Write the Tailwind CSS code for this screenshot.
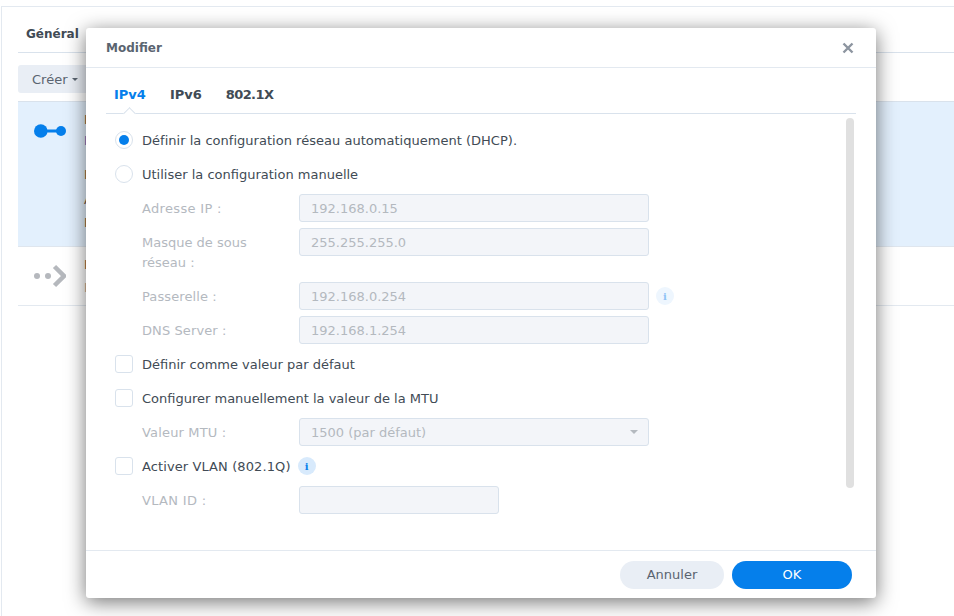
<!DOCTYPE html>
<html lang="fr">

<head>
    <meta charset="UTF-8">
    <title>Modifier</title>
    <script src="https://cdn.jsdelivr.net/npm/@tailwindcss/browser@4"></script>
</head>

<body class="relative w-[954px] h-[616px] overflow-hidden bg-white font-['DejaVu_Sans',sans-serif] text-[13px] text-[#414b55]">
    <!-- page behind the dialog -->
    <div class="h-[616px] pt-[6px] pl-[1px]">
        <div class="h-[610px] border-t border-l border-[#e3e9f0] pl-[16px]">
            <div class="h-[46px] pt-[19px] pl-[8px] border-b border-[#d9e2ec] font-bold text-[12px] leading-[16px]">Général</div>
            <div class="pt-[12px] h-[49px] border-b border-[#d9e2ec]">
                <div class="flex items-center w-[80px] h-[28px] pl-[14px] rounded-[3px] bg-[#e9eef5] text-[#5a6470]">
                    <span class="pt-[2px]">Créer</span>
                    <span class="ml-[5px] border-x-[3px] border-t-[3px] border-x-transparent border-t-[#5a6470]"></span>
                </div>
            </div>
            <div class="flex h-[145px] bg-[#e3f0fd] border-b border-[#dfe6ee]">
                <svg class="mt-[19px] ml-[16px] w-[32px] h-[20px] shrink-0" viewBox="0 0 32 20">
                    <circle cx="6.800" cy="10" r="6.800" fill="#057feb" />
                    <circle cx="27" cy="10" r="5" fill="#057feb" />
                    <rect x="10" y="8.500" width="14" height="3" fill="#057feb" />
                </svg>
                <div class="ml-[18px] pt-[8px] leading-[20px] text-[#7a5c40]">
                    <div>L</div>
                    <div class="mt-[1px] text-[#4a5fc0]">D</div>
                    <div class="mt-[14px]">D</div>
                    <div class="mt-[5px]">A</div>
                    <div class="mt-[3px]">D</div>
                </div>
            </div>
            <div class="flex h-[59px] border-b border-[#e3e9f0]">
                <svg class="mt-[17px] ml-[16px] w-[32px] h-[24px] shrink-0" viewBox="0 0 32 24">
                    <circle cx="3" cy="12" r="3" fill="#b5b8bd" />
                    <circle cx="14" cy="12" r="3" fill="#b5b8bd" />
                    <path d="M20.500 2.500l9.500 9.500-9.500 9.500" fill="none" stroke="#b5b8bd" stroke-width="4.500" />
                </svg>
                <div class="ml-[18px] pt-[8px] leading-[20px] text-[#7a5c40]">
                    <div>L</div>
                    <div class="mt-[3px] text-[#b5a898]">D</div>
                </div>
            </div>
        </div>
    </div>

    <!-- dialog -->
    <div class="absolute left-[86px] top-[28px] flex flex-col w-[790px] h-[570px] rounded-[3px] bg-white shadow-[0_4px_20px_rgba(0,0,0,0.55)]">
        <div class="flex items-center justify-between h-[40px] pl-[20px] pr-[21px] border-b border-[#e3e9f0]">
            <span class="font-bold text-[12px] text-[#5a6470]">Modifier</span>
            <svg class="w-[14px] h-[14px]" viewBox="0 0 14 14">
                <path d="M2.500 2.500l9 9M11.500 2.500l-9 9" stroke="#8d95a0" stroke-width="2.400" />
            </svg>
        </div>
        <div class="flex-1 px-[20px]">
            <div class="relative flex gap-[24px] h-[46px] pt-[19px] pl-[8px] border-b border-[#d9e2ec] font-bold text-[13px] leading-[16px]">
                <span class="text-[#057feb]">IPv4</span>
                <span>IPv6</span>
                <span class="tracking-[-0.6px]">802.1X</span>
                <span class="absolute left-[19px] top-[41px] w-[9px] h-[9px] rotate-45 bg-white border-l border-t border-[#d9e2ec]"></span>
            </div>
            <div class="relative">
                <div class="absolute left-[740px] top-[-8px] w-[8px] h-[370px] rounded-[4px] bg-[#e0e0e0]"></div>
                <div class="flex items-center h-[28px] mt-[12px] pl-[9px]">
                    <span class="flex items-center justify-center w-[18px] h-[18px] rounded-full border border-[#d9e2ec]"><span class="w-[10px] h-[10px] rounded-full bg-[#057feb]"></span></span>
                    <span class="ml-[9px] pt-[2px] tracking-[0.02px]">Définir la configuration réseau automatiquement (DHCP).</span>
                </div>
                <div class="flex items-center h-[28px] mt-[6px] pl-[9px]">
                    <span class="w-[18px] h-[18px] rounded-full border border-[#d9e2ec]"></span>
                    <span class="ml-[9px] pt-[2px]">Utiliser la configuration manuelle</span>
                </div>
                <div class="flex items-center h-[28px] mt-[6px] pl-[36px] text-[#b4b9bf]">
                    <span class="w-[157px] pt-[2px] tracking-[0.33px]">Adresse IP :</span>
                    <div class="flex items-center w-[350px] h-[28px] pl-[11px] pt-[2px] rounded-[3px] border border-[#d9e2ec] bg-[#f3f5f9]">192.168.0.15</div>
                </div>
                <div class="flex items-start h-[48px] mt-[6px] pl-[36px] text-[#b4b9bf]">
                    <span class="w-[157px] pt-[5px] leading-[20px]">Masque de sous<br>réseau :</span>
                    <div class="flex items-center w-[350px] h-[28px] pl-[11px] pt-[2px] rounded-[3px] border border-[#d9e2ec] bg-[#f3f5f9]">255.255.255.0</div>
                </div>
                <div class="flex items-center h-[28px] mt-[6px] pl-[36px] text-[#b4b9bf]">
                    <span class="w-[157px] pt-[2px] tracking-[0.1px]">Passerelle :</span>
                    <div class="flex items-center w-[350px] h-[28px] pl-[11px] pt-[2px] rounded-[3px] border border-[#d9e2ec] bg-[#f3f5f9]">192.168.0.254</div>
                    <span class="flex items-center justify-center ml-[7px] w-[18px] h-[18px] rounded-full bg-[#eef6fe] font-['DejaVu_Serif',serif] font-bold text-[10px] text-[#8fc3f5]">i</span>
                </div>
                <div class="flex items-center h-[28px] mt-[6px] pl-[36px] text-[#b4b9bf]">
                    <span class="w-[157px] pt-[2px] tracking-[0.1px]">DNS Server :</span>
                    <div class="flex items-center w-[350px] h-[28px] pl-[11px] pt-[2px] rounded-[3px] border border-[#d9e2ec] bg-[#f3f5f9]">192.168.1.254</div>
                </div>
                <div class="flex items-center h-[28px] mt-[6px] pl-[9px]">
                    <span class="w-[18px] h-[18px] rounded-[3px] border border-[#d9e2ec]"></span>
                    <span class="ml-[9px] pt-[2px]">Définir comme valeur par défaut</span>
                </div>
                <div class="flex items-center h-[28px] mt-[6px] pl-[9px]">
                    <span class="w-[18px] h-[18px] rounded-[3px] border border-[#d9e2ec]"></span>
                    <span class="ml-[9px] pt-[2px]">Configurer manuellement la valeur de la MTU</span>
                </div>
                <div class="flex items-center h-[28px] mt-[6px] pl-[36px] text-[#b4b9bf]">
                    <span class="w-[157px] pt-[2px] tracking-[0.17px]">Valeur MTU :</span>
                    <div class="flex items-center justify-between w-[350px] h-[28px] pl-[11px] pr-[10px] rounded-[3px] border border-[#d9e2ec] bg-[#f3f5f9]">
                        <span class="pt-[2px]">1500 (par défaut)</span>
                        <span class="border-x-[4px] border-t-[4px] border-x-transparent border-t-[#b4b9bf]"></span>
                    </div>
                </div>
                <div class="flex items-center h-[28px] mt-[6px] pl-[9px]">
                    <span class="w-[18px] h-[18px] rounded-[3px] border border-[#d9e2ec]"></span>
                    <span class="ml-[9px] pt-[2px] tracking-[0.1px]">Activer VLAN (802.1Q)</span>
                    <span class="flex items-center justify-center ml-[7px] w-[18px] h-[18px] rounded-full bg-[#d8eafc] font-['DejaVu_Serif',serif] font-bold text-[10px] text-[#057feb]">i</span>
                </div>
                <div class="flex items-center h-[28px] mt-[6px] pl-[36px] text-[#b4b9bf]">
                    <span class="w-[157px] pt-[2px] tracking-[0.33px]">VLAN ID :</span>
                    <div class="w-[200px] h-[28px] rounded-[3px] border border-[#d9e2ec] bg-[#f3f5f9]"></div>
                </div>
            </div>
        </div>
        <div class="flex items-center justify-end gap-[8px] h-[48px] pr-[24px] border-t border-[#e3e9f0]">
            <button class="w-[104px] h-[28px] rounded-full bg-[#e9eef5] text-[#5a6470]">Annuler</button>
            <button class="w-[120px] h-[28px] rounded-full bg-[#057feb] text-white">OK</button>
        </div>
    </div>
</body>

</html>
